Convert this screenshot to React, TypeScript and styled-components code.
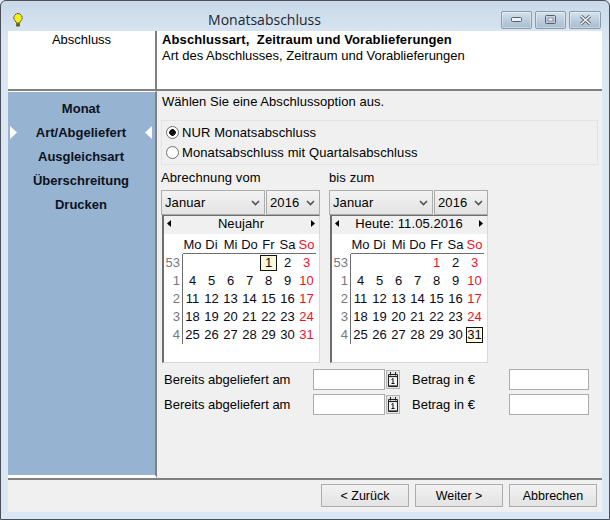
import React from "react";
import styled, { createGlobalStyle } from "styled-components";

const Global = createGlobalStyle`
  html, body { margin: 0; padding: 0; background: #dfe9f5; }
  * { box-sizing: border-box; }
`;

const Window = styled.div`
  width: 610px;
  height: 520px;
  display: flex;
  flex-direction: column;
  border: 1px solid #4a5058;
  border-radius: 6px 6px 0 0;
  background: linear-gradient(180deg, #c9d9e9 0, #dbe7f3 40px, #dbe7f4 100%);
  font-family: "Liberation Sans", Arial, sans-serif;
  font-size: 13px;
  color: #000;
  overflow: hidden;
`;

const TitleBar = styled.div`
  height: 30px;
  flex: none;
  display: flex;
  align-items: center;
  padding: 0 8px 0 11px;
`;

const AppIcon = styled.svg`
  width: 12px;
  height: 16px;
  flex: none;
  margin-top: 8px;
`;

const Title = styled.div`
  flex: 1;
  text-align: center;
  padding-left: 4px;
  margin-top: 7px;
  font-family: "Open Sans", sans-serif;
  font-size: 14px;
  color: #1c2630;
`;

const CaptionButtons = styled.div`
  display: flex;
  gap: 3px;
  margin-top: 7px;
`;

const CaptionButton = styled.div<{ $wide?: boolean }>`
  width: ${(p) => (p.$wide ? 32 : 31)}px;
  height: 18px;
  display: flex;
  align-items: center;
  justify-content: center;
  border: 1px solid #8a9bad;
  border-radius: 2px;
  background: linear-gradient(180deg, #d6e2ee 0, #bccddd 50%, #a9bccf 100%);
  box-shadow: inset 0 0 0 1px rgba(255, 255, 255, 0.35);
`;

const Client = styled.div`
  flex: 1;
  margin: 0 7px;
  display: flex;
  flex-direction: column;
  background: #f0f0f0;
`;

const Header = styled.div`
  height: 60px;
  flex: none;
  display: grid;
  grid-template-columns: 149px 1fr;
  background: #fff;
  border-bottom: 2px solid #808080;
`;

const HeaderLeft = styled.div`
  text-align: center;
  padding: 1px 0 0;
  border-right: 2px solid #808080;
`;

const HeaderRight = styled.div`
  padding: 1px 0 0 5px;
  line-height: 16px;
`;

const HeaderTitle = styled.div`
  font-weight: bold;
  white-space: pre;
  letter-spacing: 0.11px;
`;

const Middle = styled.div`
  flex: 1;
  display: grid;
  grid-template-columns: 149px 1fr;
  min-height: 0;
  border-bottom: 2px solid #808080;
`;

const Sidebar = styled.div`
  border-right: 2px solid #808080;
  border-top: 1px solid #fff;
  border-bottom: 3px solid #fff;
  background: #97b3d2;
  padding-top: 4px;
  display: flex;
  flex-direction: column;
`;

const NavItem = styled.div`
  height: 24px;
  display: grid;
  grid-template-columns: 1fr auto 1fr;
  align-items: center;
  padding: 0 3px 0 2px;
  font-weight: bold;
  font-size: 13px;
  color: #0c1220;
`;

const Marker = styled.svg<{ $right?: boolean }>`
  width: 7px;
  height: 13px;
  justify-self: ${(p) => (p.$right ? "end" : "start")};
`;

const Content = styled.div`
  padding: 4px 4px 0 4px;
  display: flex;
  flex-direction: column;
`;

const Hint = styled.div`
  height: 14px;
  line-height: 14px;
  padding-left: 1px;
  letter-spacing: 0.05px;
`;

const OptionBox = styled.div`
  margin-top: 11px;
  height: 45px;
  width: 437px;
  border: 1px solid #e3e3e3;
  padding: 3px 4px;
  display: flex;
  flex-direction: column;
  gap: 2px;
`;

const Option = styled.label`
  height: 18px;
  display: flex;
  align-items: center;
  gap: 3px;
  letter-spacing: 0.1px;
`;

const RadioDot = styled.span<{ $on?: boolean }>`
  width: 13px;
  height: 13px;
  border-radius: 50%;
  border: 1px solid #6f6f6f;
  background: ${(p) => (p.$on ? "radial-gradient(circle, #111 0 3px, #fff 3.6px)" : "#fff")};
`;

const Calendars = styled.div`
  margin-top: 5px;
  display: grid;
  grid-template-columns: 159px 159px;
  column-gap: 9px;
`;

const CalColumn = styled.div`
  display: flex;
  flex-direction: column;
`;

const CalLabel = styled.div`
  height: 20px;
  line-height: 16px;
  letter-spacing: 0.1px;
`;

const Combos = styled.div`
  display: flex;
  gap: 1px;
  height: 25px;
`;

const Combo = styled.div<{ $w: number }>`
  width: ${(p) => p.$w}px;
  display: flex;
  align-items: center;
  justify-content: space-between;
  padding: 0 4px 0 3px;
  border: 1px solid #acacac;
  background: linear-gradient(180deg, #f3f3f3, #e3e3e3);
  letter-spacing: 0.1px;
`;

const Calendar = styled.div`
  height: 148px;
  background: #fff;
  border-left: 2px solid #6e6e6e;
  border-top: 1px solid #6e6e6e;
  border-right: 1px solid #d8d8d8;
  border-bottom: 1px solid #d8d8d8;
  margin-left: 1px;
`;

const CalNav = styled.div`
  height: 18px;
  display: flex;
  align-items: center;
  justify-content: space-between;
  background: #f0f0f0;
  padding: 0 4px 3px 3px;
`;

const CalNavText = styled.span`
  letter-spacing: 0.1px;
`;

const Days = styled.div`
  display: grid;
  grid-template-columns: 19px repeat(7, 19px);
  grid-template-rows: 17px;
  grid-auto-rows: 18px;
  margin-top: 3px;
  text-align: center;
  line-height: 18px;
`;

const Cell = styled.div<{ $head?: boolean; $week?: boolean; $red?: boolean }>`
  color: ${(p) => (p.$red ? "#f0102a" : p.$week ? "#77777c" : "#0a0a20")};
  ${(p) => (p.$head ? "border-bottom: 1px solid #6e6e6e; line-height: 16px;" : "")}
  ${(p) => (p.$week ? "border-right: 1px solid #6e6e6e; text-align: right; padding-right: 2px;" : "")}
`;

const Selected = styled.span`
  display: inline-block;
  width: 17px;
  height: 16px;
  line-height: 14px;
  margin-top: 1px;
  vertical-align: top;
  border: 1px solid #111;
  background: #fbf8dc;
  color: #0a0a20;
`;

const FormRows = styled.div`
  margin-top: 6px;
  display: flex;
  flex-direction: column;
  gap: 4px;
`;

const FormRow = styled.div`
  display: flex;
  align-items: center;
  height: 21px;
  padding-left: 3px;
`;

const FormLabel = styled.span<{ $w: number }>`
  width: ${(p) => p.$w}px;
  flex: none;
`;

const Field = styled.div<{ $w: number }>`
  width: ${(p) => p.$w}px;
  height: 21px;
  flex: none;
  background: #fff;
  border: 1px solid #ababab;
`;

const DateButton = styled.div`
  width: 14px;
  height: 19px;
  margin: 0 12px 0 1px;
  flex: none;
  display: flex;
  align-items: center;
  justify-content: center;
  border: 1px solid #b5b5b5;
  background: #e4e4e4;
`;

const Footer = styled.div`
  height: 32px;
  flex: none;
  display: flex;
  justify-content: flex-end;
  gap: 6px;
  padding: 4px 5px 0 0;
`;

const PushButton = styled.div`
  width: 88px;
  height: 23px;
  display: flex;
  align-items: center;
  justify-content: center;
  border: 1px solid #adadad;
  background: linear-gradient(180deg, #f2f2f2, #e3e3e3);
  font-size: 12.5px;
`;

const BottomEdge = styled.div`
  height: 7px;
  flex: none;
`;

const Chevron = () => (
  <svg width="9" height="6" viewBox="0 0 9 6">
    <path d="M1 1l3.5 3.5L8 1" fill="none" stroke="#555" strokeWidth="1.7" />
  </svg>
);

const NavArrow = ({ right }: { right?: boolean }) => (
  <svg width="4" height="7" viewBox="0 0 4 7">
    <path d={right ? "M0 0l4 3.5L0 7z" : "M4 0L0 3.5 4 7z"} fill="#000" />
  </svg>
);

const CalendarIcon = () => (
  <svg width="10" height="15" viewBox="0 0 10 15">
    <path d="M.5 2.5h9v12h-9z" fill="#f4f4f4" stroke="#222" />
    <path d="M2.5 0v3.5M7.5 0v3.5" stroke="#222" />
    <path d="M1 4.5h8" stroke="#222" strokeWidth="1.2" />
    <path d="M3.5 7.5L5 6.5v5M3.5 11.5h3" fill="none" stroke="#111" />
    <path d="M1 13.5h8" stroke="#777" />
  </svg>
);

const heads = ["Mo", "Di", "Mi", "Do", "Fr", "Sa", "So"];
const weeks: [number, (number | null)[]][] = [
  [53, [null, null, null, null, 1, 2, 3]],
  [1, [4, 5, 6, 7, 8, 9, 10]],
  [2, [11, 12, 13, 14, 15, 16, 17]],
  [3, [18, 19, 20, 21, 22, 23, 24]],
  [4, [25, 26, 27, 28, 29, 30, 31]],
];

const MonthCalendar = ({
  label,
  caption,
  selected,
  holiday,
}: {
  label: string;
  caption: string;
  selected: number;
  holiday?: number;
}) => (
  <CalColumn>
    <CalLabel>{label}</CalLabel>
    <Combos>
      <Combo $w={104}>
        Januar
        <Chevron />
      </Combo>
      <Combo $w={54}>
        2016
        <Chevron />
      </Combo>
    </Combos>
    <Calendar>
      <CalNav>
        <NavArrow />
        <CalNavText>{caption}</CalNavText>
        <NavArrow right />
      </CalNav>
      <Days>
        <Cell />
        {heads.map((h) => (
          <Cell key={h} $head $red={h === "So"}>
            {h}
          </Cell>
        ))}
        {weeks.map(([wk, days]) => (
          <React.Fragment key={wk}>
            <Cell $week>{wk}</Cell>
            {days.map((d, i) => (
              <Cell key={i} $red={i === 6 || d === holiday}>
                {d === selected ? <Selected>{d}</Selected> : d}
              </Cell>
            ))}
          </React.Fragment>
        ))}
      </Days>
    </Calendar>
  </CalColumn>
);

const DeliveryRow = () => (
  <FormRow>
    <FormLabel $w={149}>Bereits abgeliefert am</FormLabel>
    <Field $w={72} />
    <DateButton>
      <CalendarIcon />
    </DateButton>
    <FormLabel $w={97}>Betrag in €</FormLabel>
    <Field $w={80} />
  </FormRow>
);

const navItems = ["Monat", "Art/Abgeliefert", "Ausgleichsart", "Überschreitung", "Drucken"];

const App = () => {
  return (
    <>
      <Global />
      <Window>
        <TitleBar>
          <AppIcon viewBox="0 0 13 16">
            <path d="M6.5 1a4.6 4.6 0 0 0-3 8c.6.6 1 1.2 1 2.2h4c0-1 .4-1.6 1-2.2a4.6 4.6 0 0 0-3-8z" fill="#f6ee1a" stroke="#222" strokeDasharray="1.5 .7" />
            <path d="M4.5 11.5h4V15h-4z" fill="#5d5a12" />
          </AppIcon>
          <Title>Monatsabschluss</Title>
          <CaptionButtons>
            <CaptionButton>
              <svg width="11" height="5" viewBox="0 0 11 5">
                <rect x=".5" y=".5" width="10" height="4" rx="1" fill="#eef3f8" stroke="#55606c" />
              </svg>
            </CaptionButton>
            <CaptionButton>
              <svg width="11" height="9" viewBox="0 0 11 9">
                <rect x=".5" y=".5" width="10" height="8" rx="1" fill="none" stroke="#55606c" />
                <rect x="3" y="3" width="5" height="3" fill="#eef3f8" stroke="#55606c" strokeWidth=".6" />
              </svg>
            </CaptionButton>
            <CaptionButton $wide>
              <svg width="13" height="10" viewBox="0 0 13 10">
                <path d="M2 1l9 8M11 1L2 9" stroke="#55606c" strokeWidth="3.2" />
                <path d="M2 1l9 8M11 1L2 9" stroke="#eef3f8" strokeWidth="1.6" />
              </svg>
            </CaptionButton>
          </CaptionButtons>
        </TitleBar>
        <Client>
          <Header>
            <HeaderLeft>Abschluss</HeaderLeft>
            <HeaderRight>
              <HeaderTitle>{"Abschlussart,  Zeitraum und Vorablieferungen"}</HeaderTitle>
              <div>Art des Abschlusses, Zeitraum und Vorablieferungen</div>
            </HeaderRight>
          </Header>
          <Middle>
            <Sidebar>
              {navItems.map((item, i) => (
                <NavItem key={item}>
                  {i === 1 ? (
                    <Marker viewBox="0 0 7 13">
                      <path d="M0 0l7 6.5L0 13z" fill="#fff" />
                    </Marker>
                  ) : (
                    <span />
                  )}
                  <span>{item}</span>
                  {i === 1 ? (
                    <Marker $right viewBox="0 0 7 13">
                      <path d="M7 0L0 6.5 7 13z" fill="#fff" />
                    </Marker>
                  ) : (
                    <span />
                  )}
                </NavItem>
              ))}
            </Sidebar>
            <Content>
              <Hint>Wählen Sie eine Abschlussoption aus.</Hint>
              <OptionBox>
                <Option>
                  <RadioDot $on />
                  NUR Monatsabschluss
                </Option>
                <Option>
                  <RadioDot />
                  Monatsabschluss mit Quartalsabschluss
                </Option>
              </OptionBox>
              <Calendars>
                <MonthCalendar label="Abrechnung vom" caption="Neujahr" selected={1} />
                <MonthCalendar label="bis zum" caption="Heute: 11.05.2016" selected={31} holiday={1} />
              </Calendars>
              <FormRows>
                <DeliveryRow />
                <DeliveryRow />
              </FormRows>
            </Content>
          </Middle>
          <Footer>
            <PushButton>&lt; Zurück</PushButton>
            <PushButton>Weiter &gt;</PushButton>
            <PushButton>Abbrechen</PushButton>
          </Footer>
        </Client>
        <BottomEdge />
      </Window>
    </>
  );
};

export default App;
